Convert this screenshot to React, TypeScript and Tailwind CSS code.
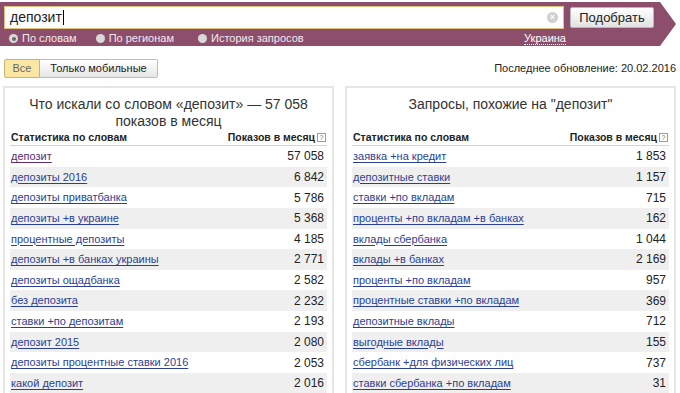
import React from "react";

type Row = { q: string; n: string; visited?: boolean };

const left: Row[] = [
  { q: "депозит", n: "57 058", visited: true },
  { q: "депозиты 2016", n: "6 842" },
  { q: "депозиты приватбанка", n: "5 786" },
  { q: "депозиты +в украине", n: "5 368" },
  { q: "процентные депозиты", n: "4 185" },
  { q: "депозиты +в банках украины", n: "2 771" },
  { q: "депозиты ощадбанка", n: "2 582" },
  { q: "без депозита", n: "2 232" },
  { q: "ставки +по депозитам", n: "2 193" },
  { q: "депозит 2015", n: "2 080" },
  { q: "депозиты процентные ставки 2016", n: "2 053" },
  { q: "какой депозит", n: "2 016" },
];

const right: Row[] = [
  { q: "заявка +на кредит", n: "1 853" },
  { q: "депозитные ставки", n: "1 157" },
  { q: "ставки +по вкладам", n: "715" },
  { q: "проценты +по вкладам +в банках", n: "162" },
  { q: "вклады сбербанка", n: "1 044" },
  { q: "вклады +в банках", n: "2 169" },
  { q: "проценты +по вкладам", n: "957" },
  { q: "процентные ставки +по вкладам", n: "369" },
  { q: "депозитные вклады", n: "712" },
  { q: "выгодные вклады", n: "155" },
  { q: "сбербанк +для физических лиц", n: "737" },
  { q: "ставки сбербанка +по вкладам", n: "31" },
];

function Radio({ label, checked = false }: { label: string; checked?: boolean }) {
  return (
    <span className="flex items-center gap-[4px]">
      <span className="w-[9px] h-[9px] rounded-full bg-[#d9d9d9] flex items-center justify-center">
        {checked && <span className="w-[4px] h-[4px] rounded-full bg-[#6b6b6b]" />}
      </span>
      <span>{label}</span>
    </span>
  );
}

function Panel({ title, rows }: { title: React.ReactNode; rows: Row[] }) {
  return (
    <div className="w-[331px] border-2 border-[#e6e6e6] px-[5px] pt-[8px] bg-white">
      <div className="h-[34px] text-center text-[14px] leading-[17px] text-[#333] px-[2px]">{title}</div>
      <div className="flex items-center justify-between h-[16px] border-b border-[#d5d5d5] px-[1px] text-[10.5px] font-bold text-[#222]">
        <span>Статистика по словам</span>
        <span className="flex items-center gap-[2px]">
          Показов в месяц
          <span className="w-[9px] h-[9px] border border-[#8aa88a] text-[7px] leading-[7px] text-[#4a8a4a] flex items-center justify-center font-normal">
            ?
          </span>
        </span>
      </div>
      {rows.map((r, i) => (
        <div
          key={i}
          className={`flex items-center justify-between h-[20.64px] px-[1px] ${i % 2 === 1 ? "bg-[#efefef]" : "bg-white"}`}
        >
          <a
            className={`text-[11px] underline underline-offset-[2px] ${r.visited ? "text-[#5b2c6f] decoration-[#5b2c6f]" : "text-[#2b3f94] decoration-[#2b3f94]"}`}
          >
            {r.q}
          </a>
          <span className="text-[12px] text-[#222] pr-[2px]">{r.n}</span>
        </div>
      ))}
    </div>
  );
}

export default function App() {
  return (
    <div className="w-[680px] h-[393px] overflow-hidden bg-white font-['Liberation_Sans',Arial,sans-serif]">
      {/* Search band */}
      <div className="mt-[2px] w-[676px] h-[44px] bg-[#8c4e6a] [clip-path:polygon(0_0,calc(100%-16px)_0,100%_50%,calc(100%-16px)_100%,0_100%)] pl-[4px] pt-[4px]">
        <div className="flex items-center gap-[6px]">
          <div className="w-[560px] h-[23px] bg-white border border-[#e2c07e] flex items-center justify-between pl-[5px] pr-[5px]">
            <span className="text-[14px] text-[#222] flex items-center">
              депозит<span className="w-[1px] h-[15px] bg-black ml-[1px]" />
            </span>
            <span className="w-[11px] h-[11px] rounded-full bg-[#cfcfcf] text-white text-[9px] leading-[11px] text-center font-bold">
              ×
            </span>
          </div>
          <button className="w-[84px] h-[21px] rounded-[2px] border border-[#b8b8b8] bg-gradient-to-b from-[#ffffff] to-[#e2e2e2] text-[13px] text-[#222]">
            Подобрать
          </button>
        </div>
        <div className="flex items-center text-[11px] text-[#f4e9ee] mt-[3px] pl-[5px] h-[13px]">
          <Radio label="По словам" checked />
          <span className="ml-[19px]">
            <Radio label="По регионам" />
          </span>
          <span className="ml-[24px]">
            <Radio label="История запросов" />
          </span>
          <span className="ml-auto mr-[110px] border-b border-dotted border-white text-white leading-[12px]">
            Украина
          </span>
        </div>
      </div>

      {/* Filters */}
      <div className="flex items-center justify-between mt-[13px] pl-[4px] pr-[4px]">
        <div className="flex text-[11px] text-[#222]">
          <span className="h-[19px] w-[36px] flex items-center justify-center bg-[#fbe6a2] border border-[#c9b27a] rounded-l-[2px] text-[#666]">
            Все
          </span>
          <span className="h-[19px] w-[118px] flex items-center justify-center bg-gradient-to-b from-[#ffffff] to-[#e6e6e6] border border-l-0 border-[#bdbdbd] rounded-r-[2px]">
            Только мобильные
          </span>
        </div>
        <span className="text-[11px] text-[#222]">Последнее обновление: 20.02.2016</span>
      </div>

      {/* Tables */}
      <div className="flex gap-[11px] pl-[3px] mt-[8px]">
        <Panel title={<>Что искали со словом «депозит» — 57&nbsp;058 показов в месяц</>} rows={left} />
        <Panel title={<>Запросы, похожие на "депозит"</>} rows={right} />
      </div>
    </div>
  );
}
